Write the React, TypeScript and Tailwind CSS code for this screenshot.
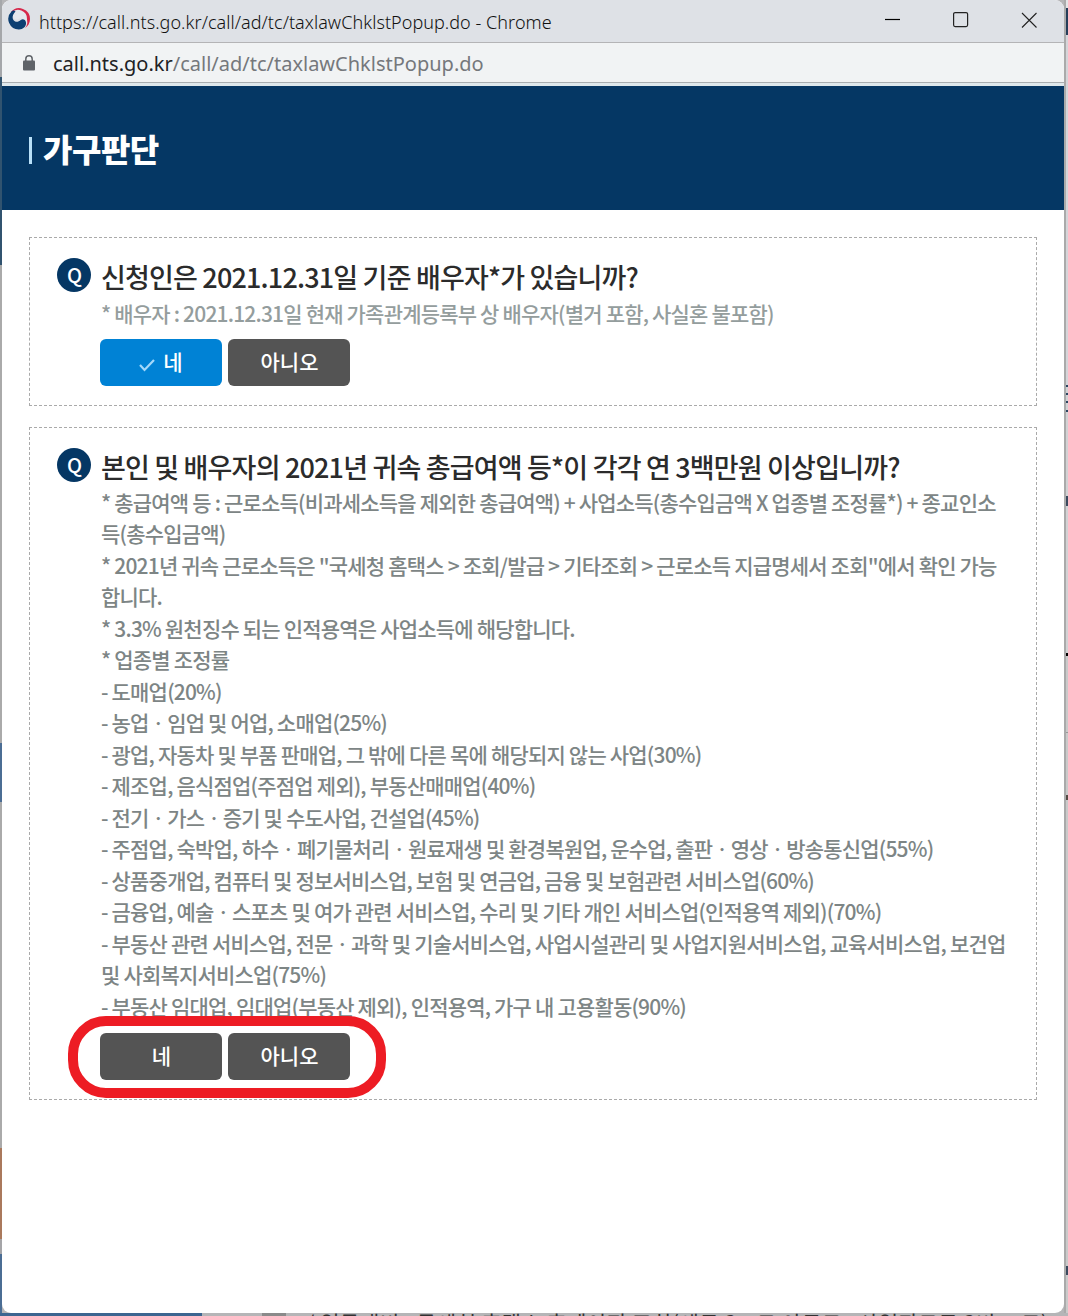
import type { ReactNode } from "react";

const INCOME_NOTES = [
  "* 총급여액 등 : 근로소득(비과세소득을 제외한 총급여액) + 사업소득(총수입금액 X 업종별 조정률*) + 종교인소",
  "득(총수입금액)",
  '* 2021년 귀속 근로소득은 "국세청 홈택스 > 조회/발급 > 기타조회 > 근로소득 지급명세서 조회"에서 확인 가능',
  "합니다.",
  "* 3.3% 원천징수 되는 인적용역은 사업소득에 해당합니다.",
  "* 업종별 조정률",
  "- 도매업(20%)",
  "- 농업ㆍ임업 및 어업, 소매업(25%)",
  "- 광업, 자동차 및 부품 판매업, 그 밖에 다른 목에 해당되지 않는 사업(30%)",
  "- 제조업, 음식점업(주점업 제외), 부동산매매업(40%)",
  "- 전기ㆍ가스ㆍ증기 및 수도사업, 건설업(45%)",
  "- 주점업, 숙박업, 하수ㆍ폐기물처리ㆍ원료재생 및 환경복원업, 운수업, 출판ㆍ영상ㆍ방송통신업(55%)",
  "- 상품중개업, 컴퓨터 및 정보서비스업, 보험 및 연금업, 금융 및 보험관련 서비스업(60%)",
  "- 금융업, 예술ㆍ스포츠 및 여가 관련 서비스업, 수리 및 기타 개인 서비스업(인적용역 제외)(70%)",
  "- 부동산 관련 서비스업, 전문ㆍ과학 및 기술서비스업, 사업시설관리 및 사업지원서비스업, 교육서비스업, 보건업",
  "및 사회복지서비스업(75%)",
  "- 부동산 임대업, 임대업(부동산 제외), 인적용역, 가구 내 고용활동(90%)",
];

function Favicon() {
  return (
    <svg width="24" height="24" viewBox="0 0 24 24" className="shrink-0">
      <path d="M4 5A10.800 10.800 0 0 1 23 12c0 4-2 7.400-5.200 9.300 2.500-3 3.400-6.500 1.600-9.600C16.800 8.100 11 9.500 9.500 7.500 7.800 5.200 5.700 5 4 5Z" fill="#d6284b" />
      <path d="M4.500 6A8.800 8.800 0 0 1 20 12c.4 2.500-.3 4.500-1.500 6L17 13.500c-1-2-3.500-3-5.500-1.500C9.500 13.500 7 12 6 10Z" fill="#e4e8ee" />
      <path d="M4.500 4.500A10.500 10.500 0 0 0 12 22.500c4.500 0 7.500-3.500 7-7-.5-3-3.200-4-5.200-2.500-2 1.500-3.800 2.500-6 1.300C4.800 12.500 4.800 8 8.500 4.500 7.500 3 5.500 3.500 4.500 4.500Z" fill="#0d3f72" />
    </svg>
  );
}

function LockIcon() {
  return (
    <svg width="12" height="16" viewBox="0 0 12 16" className="shrink-0">
      <rect x="0" y="5.500" width="12" height="10" rx="1" fill="#5f6368" />
      <path d="M2.800 6V4a3.200 3.200 0 0 1 6.400 0v2" fill="none" stroke="#5f6368" strokeWidth="1.500" />
    </svg>
  );
}

function AnswerButton({ children, active = false }: { children: ReactNode; active?: boolean }) {
  return (
    <button
      type="button"
      className={
        active
          ? "flex h-[47px] w-[122px] items-center justify-center gap-2 rounded-[6px] bg-[#0082d5] text-[21px] font-medium text-white"
          : "flex h-[47px] w-[122px] items-center justify-center rounded-[6px] bg-[#545454] pl-px text-[21px] font-medium text-white"
      }
    >
      {active && (
        <svg width="16" height="14" viewBox="0 0 16 14" className="mt-1.5">
          <path d="M1 7 5.500 12 15 2" fill="none" stroke="#a4d8fa" strokeWidth="2.200" />
        </svg>
      )}
      {children}
    </button>
  );
}

function Question({ title, children }: { title: ReactNode; children: ReactNode }) {
  return (
    <div className="flex items-start">
      <span className="flex size-[34px] shrink-0 items-center justify-center rounded-full bg-[#053764] pl-px text-[20px] font-medium text-white">
        Q
      </span>
      <div className="ml-[10px]">
        <h2 className="mt-[-1px] h-[40px] text-[27px] leading-[39px] font-medium tracking-[-0.820px] whitespace-nowrap text-[#2b2b2b]">
          {title}
        </h2>
        {children}
      </div>
    </div>
  );
}

export default function App() {
  return (
    <div className="flex h-[1316px] w-[1068px] flex-col overflow-hidden bg-[#b5b5b7] font-['Noto_Sans_CJK_KR',sans-serif]">
      <div className="flex h-[1313px]">
        {/* Left edge of the page behind */}
        <div className="flex w-[2px] shrink-0 flex-col">
          <div className="h-[77px] bg-[#a5a7aa]" />
          <div className="h-[188px] bg-[#31536f]" />
          <div className="h-[478px] bg-[#aaa]" />
          <div className="h-[59px] bg-[#4b6d94]" />
          <div className="h-[346px] bg-[#aaa]" />
          <div className="h-[91px] bg-[#aa795c]" />
          <div className="h-[15px] bg-[#a5a5a8]" />
          <div className="h-[59px] bg-[#4b6d94]" />
        </div>

        {/* Popup window */}
        <div className="flex w-[1062px] shrink-0 flex-col overflow-hidden rounded-[9px] bg-white">
          <div className="flex h-[43px] shrink-0 items-center border-b border-[#b4b4b6] bg-[#dee1e6]">
            <div className="ml-[5px] mb-1">
              <Favicon />
            </div>
            <span className="mt-0.5 ml-[8px] font-['Noto_Sans','Open_Sans',sans-serif] text-[18px] font-light tracking-[0.050px] whitespace-nowrap text-[#111]">
              https://call.nts.go.kr/call/ad/tc/taxlawChklstPopup.do - Chrome
            </span>
            <svg width="154" height="18" viewBox="0 0 154 18" className="mr-[26px] mb-[3px] ml-auto" fill="none" stroke="#222">
              <path d="M1 8.500h15" strokeWidth="1.200" stroke="#000" />
              <rect x="69.600" y="1.600" width="14" height="14" rx="1.500" strokeWidth="1.200" />
              <path d="m138 2 14.500 14.500M152.500 2 138 16.500" strokeWidth="1.100" />
            </svg>
          </div>
          <div className="flex h-[40px] shrink-0 items-center border-b border-[#a9adb0] bg-[#f1f3f4] pl-[21px]">
            <LockIcon />
            <span className="mt-0.5 ml-[18px] font-['Noto_Sans','Open_Sans',sans-serif] text-[20px] whitespace-nowrap text-[#75787c]">
              <span className="text-[#202124]">call.nts.go.kr</span>/call/ad/tc/taxlawChklstPopup.do
            </span>
          </div>
          <div className="h-[3px] shrink-0 bg-[#dfe8ec]" />

          <header className="flex h-[124px] shrink-0 items-center bg-[#053764] pl-[27px]">
            <div className="mt-[5px] h-[27px] w-[3px] bg-[#b9e0f8]" />
            <h1 className="ml-[11px] text-[32px] font-black tracking-[-0.500px] text-white">가구판단</h1>
          </header>

          <main className="flex flex-col gap-[21px] px-[27px] pt-[27px]">
            <section className="h-[169px] border border-dashed border-[#aaa] pt-[20px] pl-[27px]">
              <Question title="신청인은 2021.12.31일 기준 배우자*가 있습니까?">
                <p className="mt-px text-[21px] leading-[31.500px] font-medium tracking-[-0.810px] whitespace-nowrap text-[#949d9d]">
                  * 배우자 : 2021.12.31일 현재 가족관계등록부 상 배우자(별거 포함, 사실혼 불포함)
                </p>
                <div className="mt-[9px] ml-[-1px] flex gap-[6px]">
                  <AnswerButton active>네</AnswerButton>
                  <AnswerButton>아니오</AnswerButton>
                </div>
              </Question>
            </section>

            <section className="h-[673px] border border-dashed border-[#aaa] pt-[20px] pl-[27px]">
              <Question title="본인 및 배우자의 2021년 귀속 총급여액 등*이 각각 연 3백만원 이상입니까?">
                <div className="mt-[-0.200px] text-[21px] leading-[31.500px] font-medium tracking-[-0.810px] whitespace-nowrap text-[#7d8585]">
                  {INCOME_NOTES.map((note) => (
                    <p key={note}>{note}</p>
                  ))}
                </div>
                <div className="relative mt-[10.200px] ml-[-1px] flex gap-[6px]">
                  <AnswerButton>네</AnswerButton>
                  <AnswerButton>아니오</AnswerButton>
                  {/* Red marker around the answers */}
                  <div className="pointer-events-none absolute top-[-17px] left-[-32px] h-[82px] w-[318px] rounded-[38px] border-[10px] border-[#ed1c24]" />
                </div>
              </Question>
            </section>
          </main>
        </div>

        {/* Right edge of the page behind */}
        <div className="flex w-[4px] shrink-0 flex-col border-l-2 border-[#aaa] bg-[#d2d2d4]">
          <div className="h-[8px] bg-[#e4e4e6]" />
          <div className="h-[27px] bg-[#253e59]" />
          <div className="h-[350px] bg-[#d5d5d9]" />
          <div className="h-[2px] bg-[#2b4561]" />
          <div className="h-[6px]" />
          <div className="h-[2px] bg-[#2b4561]" />
          <div className="h-[6px]" />
          <div className="h-[2px] bg-[#2b4561]" />
          <div className="h-[7px]" />
          <div className="h-[2px] bg-[#2b4561]" />
          <div className="h-[84px] bg-[#d2d2d4]" />
          <div className="h-[10px] bg-[#3a4a5e]" />
          <div className="h-[147px] bg-[#d2d2d4]" />
          <div className="h-[3px] bg-[#000]" />
          <div className="h-[76px] bg-[#cacaca]" />
          <div className="h-px bg-[#999]" />
          <div className="h-[62px] bg-[#cacaca]" />
          <div className="h-[5px] bg-[#554b45]" />
          <div className="h-[466px] bg-[#cacaca]" />
          <div className="h-[9px] bg-[#3a4a5e]" />
          <div className="grow bg-[#cacaca]" />
        </div>
      </div>

      {/* Sliver of the page below the popup */}
      <div className="flex h-[3px] overflow-hidden">
        <div className="w-[202px] shrink-0 bg-[#3c6590]" />
        <div className="ml-[60px] w-[24px] shrink-0 bg-[#8a8a8a]" />
        <p className="ml-[20px] h-[3px] overflow-hidden text-[21px] leading-[18px] tracking-[0.600px] whitespace-nowrap text-[#333]">
          / 임금대비 : 국세청 홈택스 홈페이지 조회(세무 3그드 아르므 : 사업자드르 3비 그므)
        </p>
      </div>
    </div>
  );
}
